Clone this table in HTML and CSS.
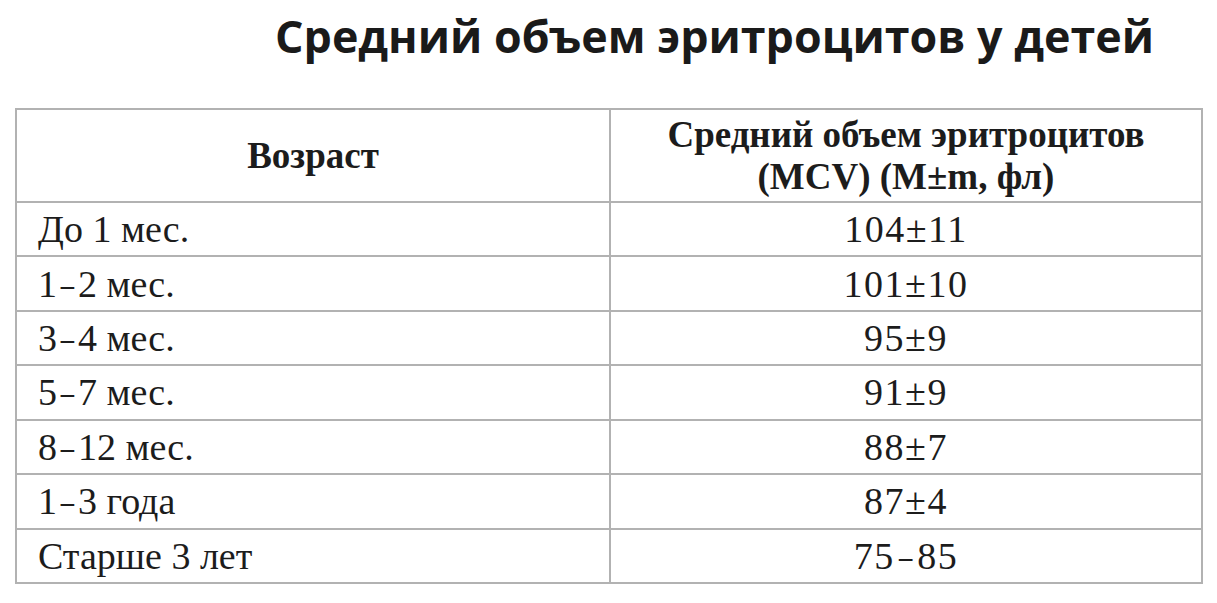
FILE: index.html
```html
<!DOCTYPE html>
<html lang="ru">
<head>
<meta charset="utf-8">
<title>Средний объем эритроцитов у детей</title>
<link rel="stylesheet" href="styles.css">
</head>
<body>
<div class="page">
  <h1 class="title">Средний объем эритроцитов у детей</h1>
  <table class="mcv">
    <thead>
      <tr class="head">
        <th class="age">Возраст</th>
        <th class="val">Средний объем эритроцитов<br>(MCV) (M±m, фл)</th>
      </tr>
    </thead>
    <tbody>
      <tr><td class="age">До 1 мес.</td><td class="val">104±11</td></tr>
      <tr><td class="age">1<span class="dash">–</span>2 мес.</td><td class="val">101±10</td></tr>
      <tr><td class="age">3<span class="dash">–</span>4 мес.</td><td class="val">95±9</td></tr>
      <tr><td class="age">5<span class="dash">–</span>7 мес.</td><td class="val">91±9</td></tr>
      <tr><td class="age">8<span class="dash">–</span>12 мес.</td><td class="val">88±7</td></tr>
      <tr><td class="age">1<span class="dash">–</span>3 года</td><td class="val">87±4</td></tr>
      <tr><td class="age">Старше 3 лет</td><td class="val">75<span class="dash">–</span>85</td></tr>
    </tbody>
  </table>
</div>
</body>
</html>
```

FILE: styles.css
```css
html, body {
  margin: 0;
  padding: 0;
  background: #ffffff;
}

.page {
  width: 1217px;
  height: 603px;
  overflow: hidden;
  padding-top: 6px;
  box-sizing: border-box;
}

.title {
  margin: 0 0 42px 0;
  padding-left: 275px;
  font-family: "Open Sans", "DejaVu Sans", sans-serif;
  font-weight: 700;
  font-size: 44.8px;
  line-height: 60px;
  color: #1a1a1a;
  white-space: nowrap;
}

.mcv {
  margin-left: 15px;
  width: 1188px;
  border-collapse: collapse;
  table-layout: fixed;
  font-family: "Liberation Serif", "Times New Roman", serif;
  color: #1c1c1c;
}

.mcv th,
.mcv td {
  border: 2px solid #b2b2b2;
  padding: 0;
}

.mcv .age {
  width: 592px;
}

.head th {
  height: 91px;
  font-size: 37px;
  font-weight: 700;
  line-height: 42px;
  text-align: center;
  vertical-align: middle;
}

.mcv td {
  height: 52.43px;
  font-size: 38px;
  line-height: 44px;
  vertical-align: middle;
}

.mcv td.age {
  text-align: left;
  padding-left: 21px;
}

.mcv td.val {
  text-align: center;
  letter-spacing: 1.5px;
}

.dash {
  display: inline-block;
  transform: scaleX(0.7);
  margin: 0 1px;
}
```
